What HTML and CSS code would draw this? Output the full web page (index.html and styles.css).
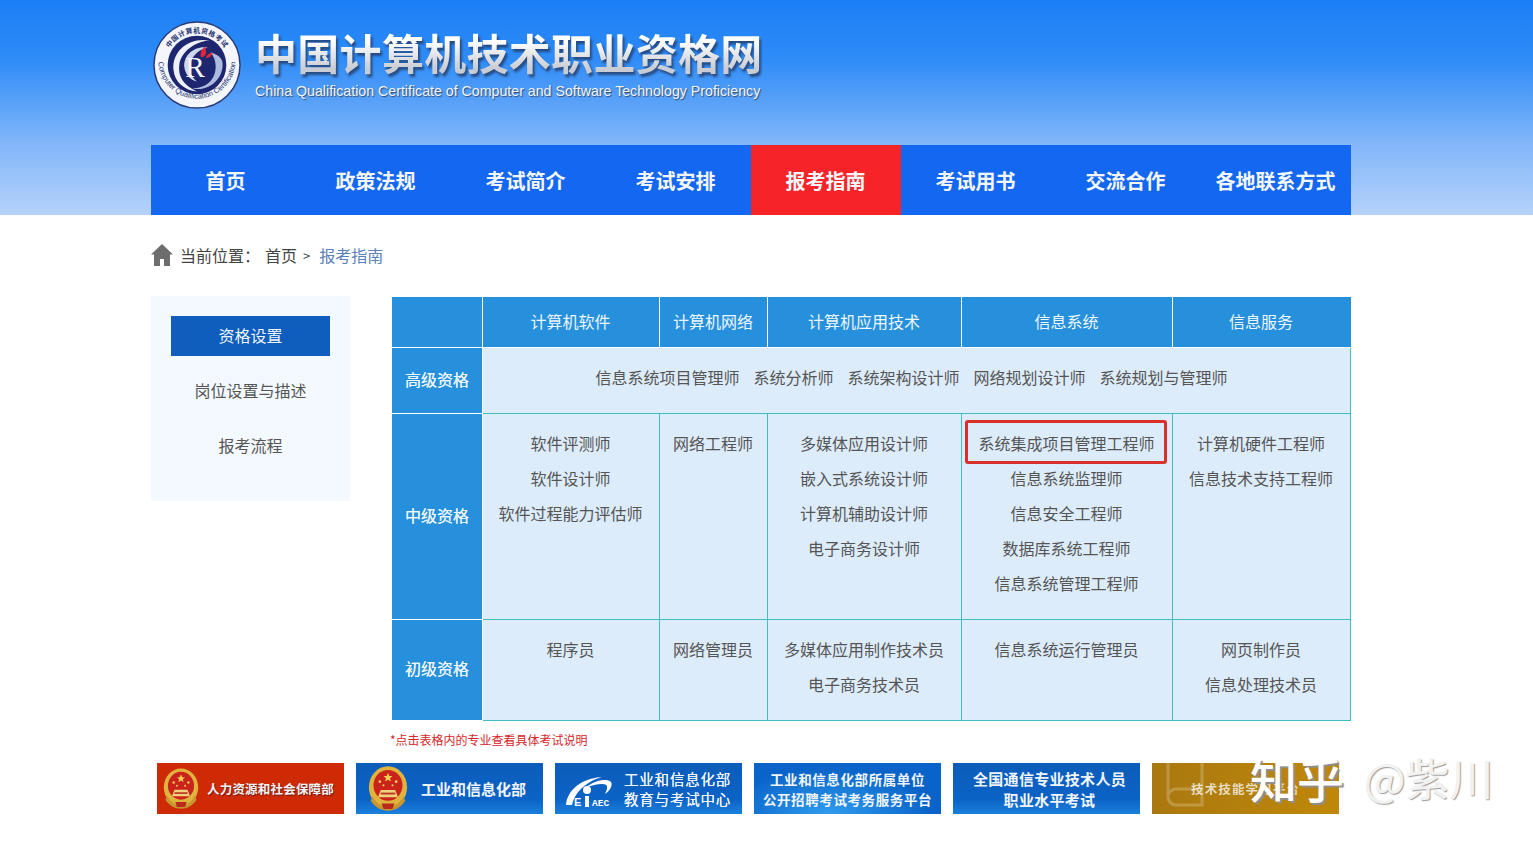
FILE: index.html
```html
<!DOCTYPE html>
<html lang="zh-CN">

<head>
    <meta charset="UTF-8">
    <title>中国计算机技术职业资格网</title>
    <link rel="stylesheet" href="styles.css">
</head>

<body>
    <svg class="defs" width="0" height="0">
        <defs>
            <symbol id="emblem" viewBox="0 0 44 50">
                <ellipse cx="22" cy="23" rx="21" ry="23" fill="#e0b43c" />
                <ellipse cx="22" cy="21" rx="16" ry="17" fill="#c9231c" />
                <path d="M22 7l1.4 3.6 3.6.2-2.8 2.3 1 3.6-3.2-2-3.2 2 1-3.6-2.8-2.3 3.6-.2z" fill="#f3cf55" />
                <circle cx="13" cy="17" r="1.5" fill="#f3cf55" />
                <circle cx="31" cy="17" r="1.5" fill="#f3cf55" />
                <circle cx="17" cy="21" r="1.2" fill="#f3cf55" />
                <circle cx="27" cy="21" r="1.2" fill="#f3cf55" />
                <path d="M11 34l3-8h16l3 8z" fill="#f0d27a" />
                <rect x="14" y="29" width="16" height="2" fill="#b5321f" />
                <path d="M5 33c4 9 12 12 17 12s13-3 17-12l2 5c-4 7-12 11-19 11S7 45 3 38z" fill="#c8962e" />
                <path d="M15 41h14l-2 6H17z" fill="#b92a1c" />
            </symbol>
        </defs>
    </svg>

    <header class="top">
        <div class="brand">
            <svg class="logo" viewBox="0 0 90 90">
                <defs>
                    <path id="arcTop" d="M12 45a33 33 0 0 1 66 0" />
                    <path id="arcBottom" d="M5.5 40a39.5 39.5 0 1 0 79 0" />
                </defs>
                <circle cx="45" cy="45" r="44" fill="#f4f6fb" stroke="#2a3a78" stroke-width="1.5" />
                <circle cx="45" cy="45" r="30" fill="#1f2670" />
                <text class="logo-cn"><textPath href="#arcTop" startOffset="50%" text-anchor="middle">中国计算机资格考试</textPath></text>
                <text class="logo-en"><textPath href="#arcBottom" startOffset="50%" text-anchor="middle">Computer Qualification Certification</textPath></text>
                <path d="M58 20C38 16 19 30 21 50c1 12 11 21 24 22C31 66 25 56 27 44c2-12 15-23 31-24z" fill="#eef1f8" />
                <path d="M71 42c2 16-13 31-31 27 14 0 25-9 24-24-.3-5-2-9-5-13 6 2 11 5 12 10z" fill="#aebbdc" />
                <path d="M56 27c-14-2-25 8-24 20 1 8 6 13 13 15-6-5-8-11-7-17 1-9 9-16 18-18z" fill="#cfd7ea" />
                <text x="33" y="57" class="logo-r">R</text>
                <path d="M49 37c-1-5 1-9 5-11-1 3 1 5 0 8-1 2-3 3-5 3zm5 1c1-3 4-6 7-5-1 3-4 5-7 5z" fill="#e5273a" />
            </svg>
            <div>
                <h1 class="brand-cn">中国计算机技术职业资格网</h1>
                <p class="brand-en">China Qualification Certificate of Computer and Software Technology Proficiency</p>
            </div>
        </div>
        <nav class="nav">
            <a href="#">首页</a>
            <a href="#">政策法规</a>
            <a href="#">考试简介</a>
            <a href="#">考试安排</a>
            <a href="#" class="on">报考指南</a>
            <a href="#">考试用书</a>
            <a href="#">交流合作</a>
            <a href="#">各地联系方式</a>
        </nav>
    </header>

    <div class="crumb">
        <svg class="home" viewBox="0 0 22 22">
            <path d="M11 0L0 10.5h3V22h6v-7h4v7h6V10.5h3z" fill="#6d6d6d" />
        </svg>
        <span class="crumb-label">当前位置：</span>
        <a href="#">首页</a>
        <span class="crumb-sep">&gt;</span>
        <a href="#" class="crumb-now">报考指南</a>
    </div>

    <main class="main">
        <aside class="side">
            <a href="#" class="on">资格设置</a>
            <a href="#">岗位设置与描述</a>
            <a href="#">报考流程</a>
        </aside>

        <div class="content">
            <table class="grid">
                <colgroup>
                    <col class="c0">
                    <col class="c1">
                    <col class="c2">
                    <col class="c3">
                    <col class="c4">
                    <col class="c5">
                </colgroup>
                <tr class="r-head">
                    <th></th>
                    <th>计算机软件</th>
                    <th>计算机网络</th>
                    <th>计算机应用技术</th>
                    <th>信息系统</th>
                    <th>信息服务</th>
                </tr>
                <tr class="r-high">
                    <th>高级资格</th>
                    <td colspan="5">
                        <div class="high-list">
                            <a href="#">信息系统项目管理师</a>
                            <a href="#">系统分析师</a>
                            <a href="#">系统架构设计师</a>
                            <a href="#">网络规划设计师</a>
                            <a href="#">系统规划与管理师</a>
                        </div>
                    </td>
                </tr>
                <tr class="r-mid">
                    <th>中级资格</th>
                    <td><a href="#">软件评测师</a><a href="#">软件设计师</a><a href="#">软件过程能力评估师</a></td>
                    <td><a href="#">网络工程师</a></td>
                    <td><a href="#">多媒体应用设计师</a><a href="#">嵌入式系统设计师</a><a href="#">计算机辅助设计师</a><a href="#">电子商务设计师</a></td>
                    <td class="marked">
                        <span class="redbox"></span>
                        <a href="#">系统集成项目管理工程师</a><a href="#">信息系统监理师</a><a href="#">信息安全工程师</a><a href="#">数据库系统工程师</a><a href="#">信息系统管理工程师</a>
                    </td>
                    <td><a href="#">计算机硬件工程师</a><a href="#">信息技术支持工程师</a></td>
                </tr>
                <tr class="r-low">
                    <th>初级资格</th>
                    <td><a href="#">程序员</a></td>
                    <td><a href="#">网络管理员</a></td>
                    <td><a href="#">多媒体应用制作技术员</a><a href="#">电子商务技术员</a></td>
                    <td><a href="#">信息系统运行管理员</a></td>
                    <td><a href="#">网页制作员</a><a href="#">信息处理技术员</a></td>
                </tr>
            </table>
            <p class="note">*点击表格内的专业查看具体考试说明</p>
        </div>
    </main>

    <div class="links">
        <a href="#" class="ban ban-red">
            <svg class="emblem-sm"><use href="#emblem" /></svg>
            <span>人力资源和社会保障部</span>
        </a>
        <a href="#" class="ban ban-blue ban-miit">
            <svg class="emblem-lg"><use href="#emblem" /></svg>
            <span>工业和信息化部</span>
        </a>
        <a href="#" class="ban ban-blue ban-ceiaec">
            <svg class="ceiaec" viewBox="0 0 56 34">
                <path d="M1 30C2 15 17 3 37 2 23 6 10 16 7 30z" fill="#fff" />
                <path d="M20 13C30 5 42 3 46 7c2 3-1 9-6 12 2-4 3-8 1-9-3-2-11-1-21 3z" fill="#fff" />
                <circle cx="22" cy="15" r="4" fill="#fff" />
                <text x="9" y="31" class="ceiaec-text">E</text>
                <rect x="20" y="21" width="4" height="11" fill="#fff" />
                <text x="27" y="31" class="ceiaec-small">AEC</text>
            </svg>
            <span class="two">工业和信息化部<br>教育与考试中心</span>
        </a>
        <a href="#" class="ban ban-light">
            <span class="two center">工业和信息化部所属单位<br>公开招聘考试考务服务平台</span>
        </a>
        <a href="#" class="ban ban-blue">
            <span class="two center big">全国通信专业技术人员<br>职业水平考试</span>
        </a>
        <a href="#" class="ban ban-gold">
            <svg class="book" viewBox="0 0 44 50">
                <path d="M4 0v38a8 8 0 0 0 8 8h26V30H12a8 8 0 0 0-8 8M38 30V0" fill="none" stroke="#fff" stroke-opacity=".22" stroke-width="3" />
            </svg>
            <span>技术技能学习平台</span>
        </a>
    </div>

    <div class="mark"><span class="mark-a">知乎</span><span class="mark-b">@紫川</span></div>
</body>

</html>
```

FILE: styles.css
```css
* {
    box-sizing: border-box;
}

body {
    margin: 0;
    height: 841px;
    overflow: hidden;
    background-color: #fff;
    color: #555;
    font-family: "Noto Sans CJK SC", "Liberation Sans", sans-serif;
    font-size: 16px;
}

a {
    color: inherit;
    text-decoration: none;
}

.defs {
    display: block;
    height: 0;
}

.top {
    height: 215px;
    padding: 0 0 0 151px;
    background: linear-gradient(to bottom, #1a7ef6 0, #2f8cf7 60px, #7fb5f9 140px, #b5d2fa 215px);
}

.brand {
    display: flex;
    height: 145px;
    padding: 21px 0 0 2px;
    gap: 14px;
}

.logo {
    width: 88px;
    height: 88px;
}

.logo-cn {
    font-size: 7px;
    font-weight: 700;
    letter-spacing: .5px;
    fill: #26326f;
}

.logo-en {
    font-family: "Liberation Sans", sans-serif;
    font-size: 7.6px;
    fill: #26326f;
}

.logo-r {
    font-family: "Liberation Serif", serif;
    font-size: 30px;
    fill: #f4f6fb;
}

.brand-cn {
    display: inline-block;
    margin: 3px 0 0 0;
    padding: 0 6px 0 0;
    font-size: 42px;
    line-height: 56px;
    font-weight: 700;
    letter-spacing: .3px;
    white-space: nowrap;
    background: linear-gradient(to bottom, #fff 30%, #c9ccd2 80%);
    -webkit-background-clip: text;
    background-clip: text;
    color: transparent;
    filter: drop-shadow(2px 3px 1px rgba(35, 55, 95, .75));
}

.brand-en {
    margin: 2px 0 0 0;
    font-family: "Liberation Sans", sans-serif;
    font-size: 14.2px;
    line-height: 18px;
    color: #f2f5fa;
    white-space: nowrap;
    text-shadow: 1px 1px 1px #334a70;
}

.nav {
    display: flex;
    width: 1200px;
    height: 70px;
    background-color: #1467f0;
}

.nav a {
    width: 150px;
    padding-right: 1px;
    line-height: 72px;
    text-align: center;
    color: #f4f7fc;
    font-size: 20px;
    font-weight: 700;
}

.nav a.on {
    background-color: #f62428;
}

.crumb {
    display: flex;
    align-items: center;
    height: 26px;
    margin: 27px 0 0 151px;
    color: #444;
    font-size: 16px;
}

.home {
    width: 22px;
    height: 22px;
    margin-right: 7px;
}

.crumb-label {
    width: 85px;
}

.crumb-sep {
    margin: 0 9px 0 6px;
    font-size: 13px;
}

.crumb-now {
    color: #5b80bb;
}

.main {
    display: flex;
    margin: 28px 0 0 151px;
}

.side {
    width: 199px;
    height: 205px;
    padding: 20px;
    background-color: #f3f9fe;
    text-align: center;
}

.side a {
    display: block;
    height: 40px;
    line-height: 38px;
    margin-bottom: 15px;
    color: #555;
}

.side a.on {
    background-color: #0f5dbd;
    color: #eef5fc;
}

.content {
    margin: 1px 0 0 42px;
}

.grid {
    width: 958px;
    table-layout: fixed;
    border-collapse: collapse;
    text-align: center;
}

.c0 { width: 90px; }
.c1 { width: 177px; }
.c2 { width: 108px; }
.c3 { width: 194px; }
.c4 { width: 211px; }
.c5 { width: 178px; }

.grid th {
    padding: 0 1px 4px 0;
    background-color: #2690dd;
    border: 1px solid #fff;
    border-left-color: #2690dd;
    color: #eef7fd;
    font-weight: 400;
    text-shadow: 0 0 .5px #eef7fd;
}

.r-head th {
    border-top-color: #2690dd;
    border-right-color: #fff;
}

.r-head th:last-child {
    border-right-color: #2690dd;
}

.r-head th:not(:first-child) {
    text-shadow: none;
}

.grid td {
    padding: 13px 1px 0 0;
    background-color: #ddecfb;
    border: 1px solid #3fbfc5;
    vertical-align: top;
    color: #555;
}

.grid td a {
    display: block;
    height: 35px;
    line-height: 32px;
    white-space: nowrap;
}

.r-head { height: 50px; }
.r-high { height: 66px; }
.r-mid { height: 206px; }
.r-low { height: 101px; }

.high-list {
    display: flex;
    justify-content: center;
    gap: 14px;
    padding-right: 9px;
}

.grid td .high-list a {
    height: 32px;
}

.marked {
    position: relative;
}

.redbox {
    position: absolute;
    left: 3px;
    top: 6px;
    width: 202px;
    height: 44px;
    border: 3px solid #d8302a;
    border-radius: 3px;
}

.note {
    margin: 11px 0 0 -2px;
    color: #d6262b;
    font-size: 12px;
    line-height: 16px;
}

.links {
    display: flex;
    gap: 12px;
    margin: 15px 0 0 157px;
}

.ban {
    position: relative;
    display: flex;
    align-items: center;
    width: 187px;
    height: 51px;
    overflow: hidden;
    color: #f0f5fb;
    font-size: 14px;
    font-weight: 700;
    white-space: nowrap;
}

.ban-red {
    background-color: #ce2a06;
    font-size: 12.5px;
    letter-spacing: .2px;
    text-shadow: 1px 1px 1px #6e1805;
}

.ban-blue {
    background: linear-gradient(to bottom, #0c5db9, #0b62c6 70%, #1a80dc);
}

.ban-light {
    justify-content: center;
    background: radial-gradient(ellipse at 40% 100%, #2f9cee, #0a63c8 65%);
}

.ban-gold {
    justify-content: center;
    background: linear-gradient(to right, #a9780f, #c0880a);
    font-size: 12.5px;
    letter-spacing: 1.1px;
    color: #e8ddc0;
}

.emblem-sm {
    width: 36px;
    height: 46px;
    margin: 0 8px 0 6px;
}

.emblem-lg {
    width: 40px;
    height: 50px;
    margin: 0 13px 0 12px;
}

.ban-miit {
    font-size: 15px;
}

.ceiaec {
    width: 56px;
    height: 34px;
    margin: 6px 3px 0 10px;
}

.ceiaec-text {
    font-family: "Liberation Sans", sans-serif;
    font-size: 11px;
    font-weight: 700;
    fill: #fff;
}

.ceiaec-small {
    font-family: "Liberation Mono", monospace;
    font-size: 9.5px;
    font-weight: 700;
    fill: #fff;
}

.two {
    line-height: 20px;
    letter-spacing: 1px;
}

.ban-ceiaec .two {
    font-size: 14.5px;
    letter-spacing: .8px;
    font-weight: 400;
    text-shadow: 0 0 .5px #fff;
}

.center {
    width: 100%;
    text-align: center;
    font-size: 13.5px;
    letter-spacing: .6px;
}

.big {
    padding-left: 6px;
    font-size: 15px;
    letter-spacing: .3px;
    line-height: 21px;
}

.book {
    position: absolute;
    left: 12px;
    top: -6px;
    width: 44px;
    height: 54px;
}

.mark {
    position: absolute;
    left: 1250px;
    top: 744px;
    display: flex;
    align-items: center;
    height: 66px;
    white-space: nowrap;
}

.mark-a {
    color: #fff;
    font-size: 47px;
    font-weight: 500;
    text-shadow: 2px 2px 1px #8f8f8f;
}

.mark-b {
    margin-left: 20px;
    color: #f2f2f2;
    font-size: 44px;
    text-shadow: 1px 1px 1px #9c9c9c;
}
```
